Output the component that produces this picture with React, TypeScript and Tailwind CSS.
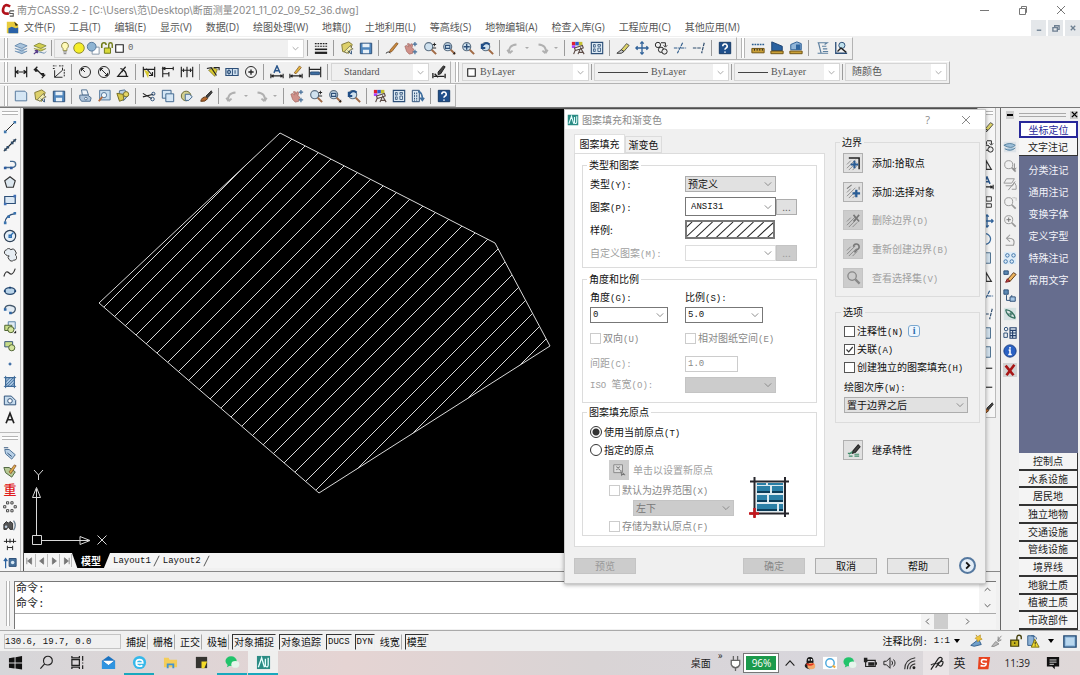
import React, { useState } from "react";

const N = "#2d4f78";
const B = "#8fb8dc";
const K = "#222";

const magnifier = (
  <>
    <circle cx="6.5" cy="6.5" r="4.6" fill="#cfe1ee" stroke="#5b6f82" strokeWidth="1.3" />
    <path d="M10 10l5 5" stroke="#a06a45" strokeWidth="2.2" />
  </>
);
const grayLens = (
  <>
    <circle cx="6.5" cy="6.5" r="4.6" stroke="#999" />
    <path d="M10 10l4.5 4.5" stroke="#999" strokeWidth="2" />
  </>
);
const hatchBase = <path d="M1 9l4-4M1 13l9-9M3 15l8-8M7 15l5-5" stroke="#777" strokeWidth=".8" />;

const icons: Record<string, React.ReactNode> = {
  layers: <path d="M1 5.5l6-3 8 3-6 3zM1 8.5l8 3 6-3M1 11.5l8 3 6-3" fill="#a9c4dc" stroke="#6d8fb0" />,
  layersPrev: (
    <>
      <path d="M1 5.5l6-3 8 3-6 3zM1 8.5l8 3 6-3" fill="#d3cf4e" stroke="#8a9145" />
      <path d="M5 12l8 2 2-2" stroke="#6d8fb0" />
      <path d="M1 15l4-4M2 11h3v3" stroke="#5a3f8a" strokeWidth="1.5" />
    </>
  ),
  bulb: (
    <>
      <path d="M8 1.5a4 4 0 0 0-2.2 7.3V11h4.4V8.8A4 4 0 0 0 8 1.5z" fill="#fffbb8" stroke="#8f8a4a" />
      <path d="M6 12.5h4M6.5 14.5h3" stroke="#777" />
    </>
  ),
  sun: <circle cx="8" cy="8" r="6" fill="#f5ee2a" stroke="#8b8730" />,
  freeze: (
    <>
      <path d="M7 7h8v8H7z" fill="#fff" stroke="#8797a8" />
      <circle cx="6.5" cy="6.5" r="5" fill="#8eb4d3" stroke="#55789b" />
    </>
  ),
  lock: (
    <>
      <path d="M2 8V4.5a2.5 2.5 0 0 1 5 0" stroke="#6f7a16" strokeWidth="1.8" />
      <path d="M5 8h7v6H5z" fill="#d8d93a" stroke="#6f7a16" />
      <path d="M10 8V4a2 2 0 0 1 4 0v4" stroke="#6f7a16" strokeWidth="1.6" />
    </>
  ),
  swatch: <path d="M2.5 2.5h11v11h-11z" fill="#fff" stroke={K} strokeWidth="1.6" />,
  lines: (
    <>
      <path d="M1 3h14M1 6h14" stroke={K} strokeWidth="1.4" strokeDasharray="2 1" />
      <path d="M1 9.5h14" stroke={K} strokeWidth="1.8" />
      <path d="M1 13.5h14" stroke={K} strokeWidth="2.6" />
    </>
  ),
  open: (
    <>
      <path d="M2 4l8-3 4 3-4 10-7-2z" fill="#ddd06a" stroke="#837a35" />
      <path d="M5 12l7-7 1 3 2 1-3 1-4 4z" fill="#f4eeb0" stroke="#5b5a43" strokeWidth=".8" />
      <path d="M9 11l4 4M13 11v4" stroke={N} />
    </>
  ),
  save: (
    <>
      <path d="M1.5 2.5h13v12h-13z" fill="#4f86bd" stroke={N} />
      <path d="M4 3h8v4H4zM4.5 10h7v4h-7z" fill="#e8f0f7" stroke="none" />
    </>
  ),
  page: <path d="M1.5 2.5h11l2 2v9h-13z" fill="#d5e6f4" stroke="#54789c" />,
  pencil: (
    <>
      <path d="M6 10l7-8 2 1-7 9-3 1z" fill="#c9893e" stroke="#7c4c1e" strokeWidth=".8" />
      <path d="M1 14q4-3 5 0" stroke={K} />
    </>
  ),
  pan: (
    <>
      <path d="M1 6l2-1 2 2-1-4h2l1 3 1-3 2 1-1 4 2 1-1 5-4 1-3-3z" fill="#cf9089" stroke="#9b6059" strokeWidth=".7" />
      <path d="M12.5 1v5M10 3.5h5M12.5 10v5M10 12.5h5" stroke="#466f99" strokeWidth="1.4" />
    </>
  ),
  zoomRt: (
    <>
      {magnifier}
      <path d="M11 4h4M13 2v4M11 8h4" stroke={K} />
    </>
  ),
  zoomWin: (
    <>
      {magnifier}
      <path d="M4 5h5v3.5H4z" stroke={N} strokeWidth="1.3" />
      <path d="M15 12v3h-3z" fill={K} stroke="none" />
    </>
  ),
  zoomExt: (
    <>
      {magnifier}
      <path d="M3 6.5h7M6.5 3v7" stroke={N} strokeWidth="1.6" />
    </>
  ),
  zoomPrev: (
    <>
      {magnifier}
      <path d="M2 7q4-7 9-3M2 3v5h4" stroke="#1f4d86" strokeWidth="2.2" />
    </>
  ),
  undo: <path d="M4 14Q2 5 12 4M4 14l-2.5-4M4 14l3.5-3" stroke="#b0b0b0" strokeWidth="2.2" />,
  redo: <path d="M12 14Q14 5 4 4M12 14l2.5-4M12 14l-3.5-3" stroke="#b0b0b0" strokeWidth="2.2" />,
  props: (
    <>
      <path d="M1 1h4v4H1z" fill="#d23" stroke="none" />
      <path d="M5 1h4v4H5z" fill="#2a5bd0" stroke="none" />
      <path d="M9 1h4v4H9z" fill="#c5c030" stroke="none" />
      <path d="M1 5h4v3H1z" fill="#a4f" stroke="none" />
      <path d="M4 8l9-3 1 3-9 3zM3 15l2-5M8 15l3-7 4 7M9 13h5" stroke="#5c4b46" strokeWidth="1.3" />
    </>
  ),
  grid: (
    <>
      <path d="M1.5 1.5h13v13h-13z" fill="#dbe8f2" stroke={N} strokeWidth="1.3" />
      <path d="M4 4h2v3H4zM9 4h3v2H9zM4 9h2v3H4zM9 8h3v4H9z" stroke={N} strokeWidth=".9" />
    </>
  ),
  palette: (
    <>
      <path d="M1.5 1.5h8v13h-8z" fill="#dbe8f2" stroke={N} />
      <path d="M4 4v10M6.5 4v10" stroke={N} strokeDasharray="2 1" />
      <path d="M8 3q5 0 5 9M10.5 10l2.5 3 2-3" stroke="#3f6f9f" strokeWidth="1.8" />
    </>
  ),
  eraser: (
    <>
      <path d="M6 10l6-7 3 2-6 7z" fill="#ddd36a" stroke={K} strokeWidth=".8" />
      <path d="M1 14l5-4 3 2-3 2z" fill="#ccc" stroke="#333" />
    </>
  ),
  move: <path d="M8 1v14M1 8h14M6 3l2-2 2 2M6 13l2 2 2-2M3 6L1 8l2 2M13 6l2 2-2 2" stroke="#2f6199" strokeWidth="1.5" />,
  copyObj: (
    <>
      <circle cx="4.5" cy="4.5" r="3" stroke={K} />
      <path d="M8 2h5v4M11 5l2 2 2-2" stroke={K} />
      <circle cx="8" cy="10" r="3" stroke={K} />
      <circle cx="12" cy="12" r="3" fill="#eee" stroke={K} />
    </>
  ),
  trim: <path d="M1 8h6M9 8h6M11 2L5 14" stroke="#315d8c" strokeWidth="1.3" strokeDasharray="4 1" />,
  extend: <path d="M1 8h9M14 2l-3 12" stroke="#2c4a6b" strokeWidth="1.3" strokeDasharray="4 1" />,
  help: (
    <>
      <path d="M1.5 1.5h13v13h-13z" fill="#1f4f8b" stroke="#143763" />
      <path d="M5.5 6a2.5 2.5 0 1 1 3.5 2.2Q8 8.8 8 10M8 12v1.5" stroke="#fff" strokeWidth="1.8" />
    </>
  ),
  dist: (
    <>
      <path d="M1 4h14" stroke="#2b5e90" strokeDasharray="2 1" strokeWidth="1.5" />
      <path d="M1 8.5h14v5H1z" fill="#caa038" stroke="#6f5211" />
      <path d="M4 9v2M7 9v2M10 9v2M13 9v2" stroke={K} />
    </>
  ),
  area: (
    <>
      <path d="M2 1l12 5v5H2z" fill="#2a62a0" stroke="#1b4270" />
      <path d="M1 11.5h14v3H1z" fill="#caa038" stroke="#6f5211" />
    </>
  ),
  mass: (
    <>
      <path d="M2 4l7-3 5 2v7H2z" fill="#91b5d8" stroke="#2d5f94" />
      <path d="M8 4h5v6H8z" fill="#2f659e" stroke="none" />
      <path d="M1 11.5h14v3H1z" fill="#caa038" stroke="#6f5211" />
    </>
  ),
  list: <path d="M3 2h11l-3 2M4 2l3 12H3M8 6h5M9 9h5M9 12h6M7 14h8" stroke="#5c7f9f" strokeWidth="1.3" />,
  locate: (
    <>
      <path d="M2 1v13h13" stroke={N} strokeWidth="1.5" />
      <circle cx="9" cy="5" r="3.5" fill="#bfe0ec" stroke={N} />
      <path d="M4 12l4-4 6 5" stroke={K} strokeWidth="1.5" />
    </>
  ),
  dimH: <path d="M1.5 2v12M14.5 2v12M2 8h12M5 6L2 8l3 2M11 6l3 2-3 2" stroke={K} strokeWidth="1.4" />,
  dimA: <path d="M1 6l4-4M10 15l4-4M3 4l9 9M3 4v3h2M12 13v-3H9" stroke={K} strokeWidth="1.5" />,
  dimOrd: (
    <>
      <path d="M3 6v8h9M3 14l9-8V3" stroke={K} />
      <path d="M1 1h4M8 1h5M1 4h3M14 5v9" stroke={K} strokeDasharray="2 1" />
    </>
  ),
  dimR: (
    <>
      <circle cx="8" cy="8" r="6.3" stroke={K} />
      <path d="M8 8L4 4M4 7V4h3" stroke={K} />
    </>
  ),
  dimD: (
    <>
      <circle cx="8" cy="8" r="6.3" stroke={K} />
      <path d="M4 4l8 8M4 7V4h3M12 9v3H9" stroke={K} />
    </>
  ),
  angle: <path d="M14 13H2L11 2M7 5q5 2 5 8M5 4l3 1-1 3" stroke={K} strokeWidth="1.4" />,
  dimQ: (
    <>
      <path d="M2 5l6 3-1 7z" fill="#d8c92e" stroke="none" />
      <path d="M1.5 2v12M14.5 2v12M2 5h12M5 4l7 8M12 8v4H8" stroke={K} strokeWidth="1.3" />
    </>
  ),
  dimB: <path d="M2 2v12M14 2v4M9 8v5M2 4h12M2 10h7M5 2.5L2 4l3 1.5" stroke={K} strokeWidth="1.3" />,
  dimC: <path d="M1.5 2v12M8 2v12M14.5 2v12M2 6h12M4 4v4M12 4v4" stroke={K} strokeWidth="1.3" />,
  leader: (
    <>
      <path d="M3 6l5-3 5 2-3 8z" fill="#d9ca34" stroke="#625a1a" strokeWidth=".7" />
      <path d="M1 4l5-1 6 9M9 3h6v3" stroke={K} strokeWidth="1.3" />
    </>
  ),
  tol: (
    <>
      <path d="M1 4h14v8H1z" fill="#cfe0f0" stroke={N} strokeWidth="1.3" />
      <circle cx="4.5" cy="8" r="2" stroke={N} />
      <path d="M8.5 4v8M4.5 5v6M11.5 6v4" stroke={N} />
    </>
  ),
  center: (
    <>
      <circle cx="8" cy="8" r="6.3" stroke={K} />
      <path d="M8 5v6M5 8h6" stroke={K} strokeWidth="1.5" />
    </>
  ),
  dimEditA: (
    <>
      <path d="M4.5 9L8 1l3.5 8M6 6.5h4" stroke="#29558a" strokeWidth="1.6" />
      <path d="M1 10v5M15 10v5M2 12.5h12M4 11l-2 1.5L4 14M12 11l2 1.5L12 14" stroke={K} strokeWidth="1.3" />
    </>
  ),
  dimEdit: (
    <>
      <path d="M6 9l6-8 2 2-6 7z" fill="#e0b43b" stroke="#7c4c1e" strokeWidth=".8" />
      <path d="M1 10v5M15 10v5M2 12.5h12M4 11l-2 1.5L4 14M12 11l2 1.5L12 14" stroke={K} strokeWidth="1.3" />
    </>
  ),
  dimUpd: (
    <>
      <path d="M1.5 2v12M14.5 2v12M2 5h12" stroke={K} strokeWidth="1.3" />
      <path d="M3 8h10v3H3z" fill="#3b6da2" stroke={N} />
    </>
  ),
  dimStyle: (
    <>
      <path d="M7 8l6-7 2 1-5 8-3 1z" fill="#444" stroke={K} />
      <path d="M1 9v6M15 10v5M2 13h12M3 10l4 4" stroke={K} strokeWidth="1.5" />
    </>
  ),
  print: (
    <>
      <path d="M4 1h6l2 6H5z" fill="#eef4fa" stroke="#4e6e90" />
      <path d="M2 7h9l4 3-1 4H4l-2-3z" fill="#afc4da" stroke="#4e6e90" />
      <circle cx="9" cy="11" r="1.5" fill="#fff" stroke="#4e6e90" />
    </>
  ),
  preview: (
    <>
      <path d="M3 1.5h12v11H3z" fill="#c6dced" stroke="#54789c" />
      <circle cx="8" cy="7" r="3" fill="#eef6fb" stroke="#54789c" />
      <path d="M6 9l-4 5" stroke="#b56a3a" strokeWidth="2" />
    </>
  ),
  publish: (
    <>
      <path d="M4 2l6-1 4 6-5 6-6-2z" fill="#b7cde2" stroke="#4e6e90" />
      <path d="M1 5l7 1 1 6-5 2z" fill="#d7c84a" stroke="#756c23" />
      <circle cx="11.5" cy="6" r="3" fill="#e6d766" stroke="#756c23" />
    </>
  ),
  cut: (
    <>
      <path d="M1 5l10 6M1 9l12-3" stroke={K} strokeWidth="1.3" />
      <circle cx="12" cy="11.5" r="2" stroke={N} />
      <circle cx="13" cy="5.5" r="1.8" stroke={N} />
    </>
  ),
  copy: (
    <>
      <path d="M1.5 1.5h10v9h-10z" fill="#d5e6f4" stroke="#41678f" />
      <path d="M5.5 5.5h9v9h-9z" fill="#d5e6f4" stroke="#41678f" />
    </>
  ),
  paste: (
    <>
      <circle cx="7" cy="8" r="5.5" fill="#d3d091" stroke="#6b6a35" />
      <path d="M6 6h5l3 3-4 4H6z" fill="#dce9f5" stroke="#41678f" />
    </>
  ),
  brush: (
    <>
      <path d="M8 8l6-6 1 2-5 6z" fill="#444" stroke="#333" />
      <path d="M2 14q1-5 6-5l2 2q-3 4-8 3z" fill="#b5672d" stroke="#5d3a1c" />
    </>
  ),
  line: (
    <>
      <path d="M3 13L13 3" stroke={K} />
      <path d="M1 12h3v3H1zM12 1h3v3h-3z" fill="#3f77ad" stroke="none" />
    </>
  ),
  xline: (
    <>
      <path d="M1 15L15 1" stroke={K} strokeWidth="1.4" />
      <path d="M4 9h3v3H4zM9 4h3v3H9zM15 1l-4 1 3 3zM1 15l1-4 3 3z" fill="#2d4a68" stroke="none" />
    </>
  ),
  pline: (
    <>
      <path d="M2 12h9a3.5 3.5 0 0 0 0-7H8" stroke="#466c92" strokeWidth="1.6" />
      <path d="M1 11h3v3H1zM8 11h3v3H8z" fill="#2d5a9e" stroke="none" />
    </>
  ),
  polygon: <path d="M8 2l6 4.5L11.8 14H4.2L2 6.5z" fill="#dce7ef" stroke="#333" strokeWidth="1.3" />,
  rect: (
    <>
      <path d="M2 4h12v8H2z" fill="#dbe8f4" stroke={N} strokeWidth="1.4" />
      <path d="M1 11h3v3H1zM12 2h3v3h-3z" fill="#3f6fb5" stroke="none" />
    </>
  ),
  arc: (
    <>
      <path d="M2 14Q3 4 14 3" stroke={N} strokeWidth="1.3" />
      <path d="M1 12h3v3H1zM5 5h3v3H5zM12 1h3v3h-3z" fill="#3a74b0" stroke="none" />
    </>
  ),
  circle: (
    <>
      <circle cx="8" cy="8" r="6.5" fill="#e3eef7" stroke="#2d4056" strokeWidth="1.3" />
      <path d="M8 8l4-4M7 7h2.5v2.5H7z" stroke="#2b6fb3" strokeWidth="1.5" />
    </>
  ),
  cloud: <path d="M3 7.5A3 3 0 0 1 4 2a3 3 0 0 1 5 0 3 3 0 0 1 5 1.5 3 3 0 0 1 0 4.5 3.2 3.2 0 0 1-2 6 3 3 0 0 1-5-1 2.6 2.6 0 0 1 0-4Q5 9.5 3 7.5z" fill="#e6edf3" stroke="#333" />,
  spline: <path d="M1 12q2-8 6-4t7-5" stroke="#333" strokeWidth="1.3" />,
  ellipse: (
    <>
      <ellipse cx="8" cy="8" rx="6" ry="3.8" fill="#b9d4ea" stroke="#26486f" strokeWidth="1.5" />
      <path d="M1 7h2v2H1zM7 3h2v2H7zM13 7h2v2h-2z" fill="#143e70" stroke="none" />
    </>
  ),
  ellArc: (
    <>
      <path d="M2 8q1-5 7-4t5 5-6 4" stroke="#44586c" strokeWidth="1.5" fill="#e2ebf3" />
      <path d="M1 7h3v3H1zM7 11h3v3H7z" fill="#2d65a5" stroke="none" />
    </>
  ),
  block: (
    <>
      <path d="M6 2h8v8H6z" fill="#dfeaf3" stroke="#5b84a8" />
      <path d="M2 6h8v6H2z" fill="#c7dc88" stroke="#4c6130" />
      <circle cx="9" cy="11" r="3.5" fill="#d5e59d" stroke="#4c6130" />
      <path d="M15 12v3h-3z" fill={K} stroke="none" />
    </>
  ),
  blockMake: (
    <>
      <path d="M2 3h9v6H2z" fill="#c7dc88" stroke="#37567a" />
      <circle cx="10" cy="10" r="3.5" fill="#d5e59d" stroke="#4c6130" />
    </>
  ),
  point: <path d="M7 7h2v2H7z" fill="#3c6ca5" stroke="#3c6ca5" />,
  hatch: (
    <>
      <path d="M3 3h10v10H3z" fill="#a9c7e3" stroke={N} />
      <path d="M3 8l5-5M3 12l9-9M5 13l8-8M9 13l4-4M3 1v14M13 1v14M1 3h14M1 13h14" stroke="#3d6a99" />
    </>
  ),
  region: (
    <>
      <path d="M1.5 3.5h8l5 5v5h-13z" fill="#c7dced" stroke={N} />
      <circle cx="8" cy="9" r="2.6" fill="#fff" stroke={N} />
    </>
  ),
  letterA: <path d="M3.5 14L8 2.5 12.5 14M5 10h6" stroke="#222" strokeWidth="1.9" />,
  tag: (
    <>
      <path d="M2 4h5l7 6-4 5-7-6z" fill="#b8d0e6" stroke="#4f7397" />
      <path d="M1 2h5M5 8l5 4" stroke={N} />
    </>
  ),
  tagEdit: (
    <>
      <path d="M1 4h6l7 5-4 6-7-5z" fill="#b6c894" stroke="#4f6740" />
      <path d="M7 9l6-8 2 1-6 9z" fill="#dfb04a" stroke="#7a3f23" strokeWidth=".8" />
    </>
  ),
  dots: <path d="M4 2h2.5v2.5H4zM9 2h2.5v2.5H9zM4 11h2.5v2.5H4zM9 11h2.5v2.5H9zM.7 6.5h2.5V9H.7zM12.7 6.5h2.5V9h-2.5z" stroke="#444" />,
  bino: (
    <>
      <path d="M1 7l3-3 2 2 2-2 3 2v7H8l-2-3-2 3H1z" fill="#555" stroke="#333" />
      <circle cx="3.5" cy="10" r="1.5" fill="#bcd" stroke="none" />
      <path d="M12 3q4 5 0 11" stroke="#6b7f91" strokeWidth="1.5" />
    </>
  ),
  gap: <path d="M1 5h14M4 2v5M8 2v5M12 2v5M5 10v5M11 10v5M5 12h6" stroke={K} />,
  copyUp: (
    <>
      <path d="M3 15V5M1 7l2-3 2 3" stroke="#2b62a0" strokeWidth="1.4" />
      <path d="M7 4h8v9H7z" fill="#48729c" stroke={N} />
      <circle cx="11" cy="8.5" r="2" fill="#d9e9f5" stroke="none" />
    </>
  ),
  triangle: <path d="M7 3v10h6z" stroke="#333" strokeWidth="1.3" />,
  rotate: <path d="M5 2a6 6 0 0 1 2 12" stroke="#3b6b9c" strokeWidth="1.5" />,
  bracket: <path d="M4 2h8v12H4z" fill="#d3e2ee" stroke="#4d6f8e" />,
  corners: <path d="M7 2h6v5H7zM7 10h6v4H7z" stroke="#333" />,
  dash: <path d="M3 6h11" stroke="#333" strokeWidth="1.4" />,
  orbit: (
    <>
      <path d="M1 2h14v12H1z" fill="#dde3e8" stroke="none" />
      <path d="M1 6q7-4 13 0-4 5-13 0zM2 10q7 4 12-1" fill="#9cbfd9" stroke="#58829f" />
    </>
  ),
  lens1: (
    <>
      {grayLens}
      <path d="M13 5v7M11 10l2 3 2-3" stroke="#888" />
    </>
  ),
  lens2: <path d="M4 2h9l-3 5H1zM3 10h8l2-4 2 4v4h-5M6 15l8-10" stroke="#999" />,
  lens3: (
    <>
      {grayLens}
      <path d="M11 2h4v4" stroke="#999" strokeDasharray="1 1" />
    </>
  ),
  lens4: (
    <>
      {grayLens}
      <path d="M4 6.5h5M6.5 4v5" stroke="#777" />
    </>
  ),
  back: <path d="M3 14h9q3-9-7-8M8 2L4 6l4 4" stroke="#999" strokeWidth="1.2" />,
  nodes: (
    <>
      <path d="M1 1h14v14H1z" fill="#dcebf7" stroke="none" />
      <circle cx="5" cy="5" r="2" stroke="#3f74a8" />
      <circle cx="12" cy="5" r="2" stroke="#3f74a8" />
      <circle cx="3" cy="12" r="2" stroke="#3f74a8" />
      <circle cx="10" cy="12" r="2" stroke="#3f74a8" />
    </>
  ),
  erase2: (
    <>
      <path d="M1 1h5v4H1z" fill="#5d8ab5" stroke={N} />
      <path d="M5 11l7-8 3 2-7 8z" fill="#eeb45c" stroke="#5d3a1c" />
      <path d="M3 14l2-4 3 3z" fill="#c44" stroke="#722" />
    </>
  ),
  flow: (
    <>
      <path d="M1 1h5v5H1z" fill="#5d8ab5" stroke={N} />
      <path d="M4 7v6h4M10 7v3" stroke={N} />
      <path d="M8 9h6v5H8z" fill="#a6c6e4" stroke={N} />
    </>
  ),
  swap: (
    <>
      <path d="M1 1h14v14H1z" fill="#d6e3e3" stroke="none" />
      <path d="M3 3q1 8 11 10M3 3q9 1 11 10M6 8h5M9 6v4" stroke="#34705f" strokeWidth="1.3" />
    </>
  ),
  table: (
    <>
      <circle cx="3.5" cy="3.5" r="2" stroke={N} />
      <path d="M1 8h4v5H1z" stroke={N} />
      <path d="M8 2h7v12H8zM8 5h7M8 8h7M8 11h7M11 5v9" fill="#dfe9f3" stroke="#25406b" strokeWidth="1.3" />
    </>
  ),
  info: (
    <>
      <circle cx="8" cy="8" r="7" fill="#2b62c4" stroke="#173c83" />
      <path d="M8 3.5v2M6.5 7H8v5M6 12h4" stroke="#fff" strokeWidth="1.8" />
    </>
  ),
  redX: (
    <>
      <path d="M0 0h16v16H0z" fill="#d2d2d2" stroke="none" />
      <path d="M3 3l9 11M13 2L4 14" stroke="#a81616" strokeWidth="3" />
    </>
  ),
  pick: (
    <>
      {hatchBase}
      <path d="M3 2h11v12" stroke={K} strokeWidth="1.6" />
      <path d="M9 5v8M5 9h8" stroke="#2a5d96" strokeWidth="2.2" />
    </>
  ),
  selObj: (
    <>
      {hatchBase}
      <path d="M1 5l5-4M14 3v3" stroke="#777" />
      <path d="M11 6v8M7 10h8" stroke="#2a5d96" strokeWidth="2.4" />
    </>
  ),
  delB: (
    <>
      {hatchBase}
      <path d="M8 2l6 7M14 2L8 9" stroke="#777" strokeWidth="1.7" />
    </>
  ),
  recB: (
    <>
      {hatchBase}
      <path d="M8 5a3 3 0 1 1 4 3l-3 3" stroke="#777" strokeWidth="1.7" />
    </>
  ),
  viewSel: (
    <>
      <circle cx="6.5" cy="6.5" r="4.5" fill="#ccc" stroke="#888" strokeWidth="1.4" />
      <path d="M10 10l4.5 4.5" stroke="#888" strokeWidth="2.4" />
    </>
  ),
  inherit: (
    <>
      <path d="M7 9l6-7 2 2-5 6-3 1z" fill="#444" stroke={K} />
      <path d="M3 12l4-3M3 14h4M9 12h5M9 14h5M2 11h4" stroke="#3f8c6a" strokeWidth="1.2" />
    </>
  ),
  clickOrigin: (
    <>
      <path d="M2 2h10v9H2z" fill="#ddd" stroke="#888" />
      <path d="M5 4l4 4M9 4L5 8M10 8l1 6 2-2 2 2" stroke="#777" strokeWidth="1.2" />
    </>
  ),
  annA: (
    <>
      <path d="M2 13L11 6l3 6-8 2z" fill="#6f9fca" stroke="#35608c" />
      <path d="M8 1l2 2 3-2v3l2 2-3 1-2 2-1-3-2-1 2-2z" fill="#f0c63a" stroke="#b08a1c" strokeWidth=".7" />
    </>
  ),
  annB: <path d="M2 14l5-6 4 3-6 3zM9 7l5-6M10 2v6l4-2" fill="#bbb" stroke="#888" />,
  padlock: (
    <>
      <path d="M2 7h9v7H2z" fill="#c4b31f" stroke="#443f0c" strokeWidth="1.4" />
      <path d="M9 7V4a2.5 2.5 0 0 1 5 0v2M6.5 9.5v2" stroke="#443f0c" strokeWidth="1.6" />
    </>
  ),
  warn: (
    <>
      <path d="M2 2h7v11H2z" fill="#8fb3d6" stroke="#35608c" />
      <path d="M6 2q6 0 6 4" stroke="#35608c" />
      <path d="M10 6l5 9H6z" fill="#f5df2f" stroke="#7b6f12" />
      <path d="M10.5 9v3M10.5 13v1" stroke={K} />
    </>
  ),
  clean: (
    <>
      <path d="M2 2h13v12H2z" fill={B} stroke="#234a74" strokeWidth="1.5" />
      <path d="M4 4h9v8H4z" fill="#b9d7ee" stroke="none" />
    </>
  ),
  win: <path d="M1 3.5l6-1V8H1zM8 2.3L15 1v7H8zM1 9h6v5.5l-6-1zM8 9h7v6.5l-7-1z" fill="#111" stroke="none" />,
  search: (
    <>
      <circle cx="9.5" cy="6" r="4.7" stroke="#222" strokeWidth="1.2" />
      <path d="M6 9.5L1.5 14.5" stroke="#222" strokeWidth="1.3" />
    </>
  ),
  taskview: <path d="M2 1v2h8V1M2 5h8v6H2zM2 15v-2h8v2M13.5 1v5M13.5 8v1M13.5 11v4" stroke="#222" strokeWidth="1.3" />,
  mail: (
    <>
      <path d="M1 6l7-5 7 5v9H1z" fill="#1b72c0" stroke="none" />
      <path d="M2 6h12l-6 5z" fill="#fff" stroke="none" />
      <path d="M1 6l7 5 7-5v9H1z" fill="#2f94e0" stroke="none" />
    </>
  ),
  edge: (
    <>
      <circle cx="8" cy="8" r="7" fill="#35b8ea" stroke="none" />
      <path d="M4.5 8.5h7q0-3.5-3.5-3.5T4.5 8.5 8 12q2 0 3-1" stroke="#fff" strokeWidth="1.8" />
    </>
  ),
  folder: (
    <>
      <path d="M1 3h5l1 2h8v8H1z" fill="#f4cd59" stroke="none" />
      <path d="M4 14V9h8v5h-2v-3H6v3z" fill="#4495cf" stroke="none" />
    </>
  ),
  note: (
    <>
      <path d="M2 2h12v12H2z" fill="#353430" stroke="none" />
      <path d="M8 7h6l-3 7H8z" fill="#f3da28" stroke="none" />
    </>
  ),
  wechat: (
    <>
      <ellipse cx="6.5" cy="6.5" rx="6" ry="5.2" fill="#22c36b" stroke="none" />
      <ellipse cx="11" cy="10" rx="4.3" ry="3.7" fill="#e6f6ec" stroke="none" />
      <path d="M3 10l-1 3 4-2z" fill="#22c36b" stroke="none" />
    </>
  ),
  acad: (
    <>
      <path d="M1 1h14v14H1z" fill="#2b8c84" stroke="none" />
      <path d="M2.5 13L6 3l3 10M10 4v8q3 2 3-2V3" stroke="#e8ffff" strokeWidth="1.4" />
    </>
  ),
  plug: <path d="M6 1v4M10 1v4M4 5h8v4q-1 3-4 3t-4-3zM8 12v3" fill="#fff" stroke="#666" strokeWidth="1.2" />,
  chevUp: <path d="M3 11l5-5.5 5 5.5" stroke="#222" strokeWidth="1.3" />,
  qq: (
    <>
      <ellipse cx="8" cy="6" rx="4" ry="5" fill="#1a1a1a" stroke="none" />
      <ellipse cx="7.5" cy="11" rx="5.5" ry="4" fill="#222" stroke="none" />
      <ellipse cx="9.5" cy="11.5" rx="4.5" ry="3.7" fill="#f4a96a" stroke="none" />
      <path d="M4 8q4 2.5 8 0v2q-4 2-8 0z" fill="#e13320" stroke="none" />
      <path d="M6 4.5h1.5M9 4.5h1.5" stroke="#fff" strokeWidth="2" />
    </>
  ),
  chat: (
    <>
      <path d="M0 1h16v14H0z" fill="#fff" stroke="none" />
      <circle cx="8" cy="8" r="4.8" stroke="#4aa7dc" strokeWidth="1.6" />
      <path d="M11 11l3 2" stroke="#f0ab3c" strokeWidth="2.2" />
    </>
  ),
  batt: (
    <>
      <path d="M3 5h11v7H3z" stroke="#222" strokeWidth="1.3" />
      <path d="M6 7h7v4H6zM14 7h2v3h-2zM1 2h4v5H1z" fill="#222" stroke="none" />
    </>
  ),
  vol: <path d="M1 6h3l4-4v12l-4-4H1zM10 5.5q2 2.5 0 5M12 4q3.5 4 0 8" stroke="#222" strokeWidth="1.1" />,
  wifi: (
    <>
      <path d="M2 15Q2 4 14 2M5 15q0-8 9-9.5M8 15q0-5 6-6" stroke="#333" strokeWidth="1.3" />
      <circle cx="12.5" cy="13.5" r="1.7" fill="#222" stroke="none" />
    </>
  ),
  pen: <path d="M2 14.5l8-12q2-2 3.5-.5t-1.5 4l-5 6.5M2 9.5q5-3 8 0t4.5-1-2-2.5-4 2.5" stroke="#222" strokeWidth="1.3" />,
  sogou: (
    <>
      <path d="M2 1h13l-2 14H1z" fill="#e8431f" stroke="none" />
      <path d="M11.5 4.5Q5 3 5 6t5.5 2.5Q11 12.5 4 11" stroke="#fff" strokeWidth="1.8" />
    </>
  ),
  notice: (
    <>
      <path d="M1 1h14v11h-5v3l-3-3H1z" fill="#111" stroke="none" />
      <path d="M4 4.5h8M4 7h8M4 9.5h5" stroke="#ddd" />
    </>
  ),
  yellowFile: (
    <>
      <path d="M1 1h10l4 4v10H1z" fill="#e7cb3c" stroke="none" />
      <path d="M3 9l4-2 5 2 3-1v7H3z" fill="#2a62a8" stroke="none" />
      <path d="M10 1l5 4-3 1z" fill="#3c2f10" stroke="none" />
    </>
  ),
  cass: (
    <>
      <path d="M10.5 4Q4 0 2.5 6.5T9 12" stroke="#b1121b" strokeWidth="3" />
      <path d="M10 9h5M10 9v3h4v3h-4" stroke="#555" strokeWidth="1.2" />
    </>
  ),
};

function Icon({ name, className = "size-[14px]" }: { name: string; className?: string }) {
  return (
    <svg viewBox="0 0 16 16" fill="none" strokeWidth="1.1" aria-hidden="true" className={`${className} shrink-0`}>
      {icons[name]}
    </svg>
  );
}

function Chevron({ className = "size-[9px] text-[#777]" }: { className?: string }) {
  return (
    <svg viewBox="0 0 10 10" fill="none" stroke="currentColor" strokeWidth="1.2" aria-hidden="true" className={`${className} shrink-0`}>
      <path d="M1 3l4 4 4-4" />
    </svg>
  );
}

function Grip() {
  return <span className="ml-[4px] mr-[3px] h-[20px] w-[4px] shrink-0 border-x border-[#b5b5b5] bg-white" />;
}

function Tools({ items }: { items: string[] }) {
  return (
    <>
      {items.map((it, i) =>
        it === "|" ? (
          <span key={i} className="mx-[3px] h-[16px] w-px shrink-0 bg-[#9b9b9b]" />
        ) : it === "v" ? (
          <span key={i} className="flex w-[10px] shrink-0 justify-center">
            <span className="border-x-2 border-t-2 border-x-transparent border-t-[#aaa]" />
          </span>
        ) : (
          <button key={i} type="button" aria-label={it} className="flex h-[20px] w-[19px] shrink-0 items-center justify-center">
            <Icon name={it} />
          </button>
        )
      )}
    </>
  );
}

const barCls = "flex h-[23px] items-center border-b border-r border-[#b3b3b3] border-t border-t-white pr-[2px]";

function BarCombo({ label, value, className, swatch, rule }: { label: string; value: string; className: string; swatch?: boolean; rule?: string }) {
  return (
    <label className={`relative flex h-[18px] shrink-0 items-center border border-[#d5d5d5] bg-[#f0f0f0] ${className}`}>
      {swatch && <Icon name="swatch" className="ml-[3px] size-[11px]" />}
      {rule && <span className={`ml-[3px] h-px shrink-0 bg-[#444] ${rule}`} />}
      <select aria-label={label} className="h-full min-w-0 flex-1 appearance-none bg-transparent pl-[3px] font-['Liberation_Serif','Noto_Sans_CJK_SC',serif] text-[10px] leading-[14px] text-[#555] outline-none">
        <option>{value}</option>
      </select>
      <span className="pointer-events-none flex h-full w-[15px] items-center justify-center bg-white">
        <Chevron className="size-[7px] text-[#999]" />
      </span>
    </label>
  );
}

const menus = ["文件(F)", "工具(T)", "编辑(E)", "显示(V)", "数据(D)", "绘图处理(W)", "地籍(J)", "土地利用(L)", "等高线(S)", "地物编辑(A)", "检查入库(G)", "工程应用(C)", "其他应用(M)"];

function Header() {
  return (
    <header className="shrink-0">
      <div className="flex h-[19px] items-center bg-white text-[#888]">
        <Icon name="cass" className="ml-px size-[14px]" />
        <h1 className="ml-[2px] whitespace-nowrap font-['Inter','Noto_Sans_CJK_SC',sans-serif] text-[10px] leading-[14px]">
          南方CASS9.2 - [C:\Users\范\Desktop\断面测量2021_11_02_09_52_36.dwg]
        </h1>
        <div className="ml-auto mr-[14px] flex items-center gap-[28px]">
          <button type="button" aria-label="minimize"><svg viewBox="0 0 10 10" className="size-[10px]" stroke="#777"><path d="M0 5.5h9" /></svg></button>
          <button type="button" aria-label="restore"><svg viewBox="0 0 10 10" className="size-[10px]" fill="none" stroke="#777"><path d="M1.5 3.5h6v6h-6zM3.5 3V1.5h5v6H8" /></svg></button>
          <button type="button" aria-label="close"><svg viewBox="0 0 10 10" className="size-[10px]" stroke="#777"><path d="M1 1l8 8M9 1L1 9" /></svg></button>
        </div>
      </div>
      <nav className="flex h-[17px] items-center bg-white pl-[6px]">
        <Icon name="yellowFile" className="size-[13px]" />
        <div className="ml-[5px] flex gap-[14px]">
          {menus.map((m) => (
            <button key={m} type="button" className="whitespace-nowrap font-['Open_Sans','Noto_Sans_CJK_SC',sans-serif] text-[10px] leading-[15px] text-[#555]">
              {m}
            </button>
          ))}
        </div>
        <div className="ml-auto flex gap-[2px] self-stretch pt-px">
          {["M2 7h5", "M1 4h5v4H1zM3 4V2h5v4H6", "M2 2l5 5M7 2L2 7"].map((d) => (
            <button key={d} type="button" aria-label="window control" className="flex w-[15px] items-center justify-center bg-[#e4e7ea]">
              <svg viewBox="0 0 9 9" className="size-[8px]" fill="none" stroke="#6d7f91" strokeWidth="1.5"><path d={d} /></svg>
            </button>
          ))}
        </div>
      </nav>
      <div className="flex h-[24px] items-center">
        <div className={barCls}>
          <Grip />
          <Tools items={["layers", "layersPrev"]} />
          <span className="ml-[2px] mr-[2px] h-[16px] w-px bg-[#9b9b9b]" />
          <label className="flex h-[19px] w-[250px] items-center border border-[#d5d5d5] bg-[#f0f0f0] pl-[3px]">
            {["bulb", "sun", "freeze", "lock"].map((n) => (
              <Icon key={n} name={n} className="size-[14px]" />
            ))}
            <Icon name="swatch" className="size-[11px]" />
            <select aria-label="图层" className="min-w-0 flex-1 appearance-none bg-transparent pl-[3px] font-['Liberation_Mono',monospace] text-[9px] leading-[14px] text-[#666]">
              <option>0</option>
            </select>
            <span className="flex h-full w-[15px] items-center justify-center bg-white"><Chevron className="size-[7px] text-[#999]" /></span>
          </label>
          <Tools items={["|", "lines", "|", "open", "save", "|", "pencil", "pan", "zoomRt", "zoomWin", "zoomExt", "zoomPrev", "|", "undo", "v", "redo", "v", "|", "props", "grid", "|", "eraser", "move", "copyObj", "trim", "extend", "|", "help"]} />
        </div>
        <div className={barCls}>
          <Grip />
          <Tools items={["dist", "area", "mass", "|", "list", "locate"]} />
        </div>
      </div>
      <div className="flex h-[24px] items-center">
        <div className={barCls}>
          <Grip />
          <Tools items={["dimH", "dimA", "dimOrd", "|", "dimR", "dimD", "angle", "|", "dimQ", "dimB", "dimC", "|", "leader", "tol", "center", "|", "dimEditA", "dimEdit", "dimUpd", "|"]} />
          <BarCombo label="标注样式" value="Standard" className="w-[98px] pl-[9px]" />
          <Tools items={["dimStyle"]} />
        </div>
        <div className={barCls}>
          <Grip />
          <BarCombo label="颜色" value="ByLayer" className="w-[127px]" swatch />
          <span className="mx-[2px] h-[16px] w-px bg-[#9b9b9b]" />
          <BarCombo label="线型" value="ByLayer" className="w-[135px]" rule="w-[50px]" />
          <span className="mx-[2px] h-[16px] w-px bg-[#9b9b9b]" />
          <BarCombo label="线宽" value="ByLayer" className="w-[106px]" rule="w-[30px]" />
          <span className="mx-[2px] h-[16px] w-px bg-[#9b9b9b]" />
          <BarCombo label="打印样式" value="随颜色" className="w-[102px] pl-[3px]" />
        </div>
      </div>
      <div className="flex h-[24px] items-center border-b border-[#777]">
        <div className={barCls}>
          <Grip />
          <Tools items={["page", "open", "save", "|", "print", "preview", "publish", "|", "cut", "copy", "paste", "brush", "|", "undo", "v", "redo", "v", "|", "pan", "zoomRt", "zoomWin", "zoomPrev", "|", "props", "grid", "palette", "|", "help"]} />
        </div>
      </div>
    </header>
  );
}

const drawTools = ["line", "xline", "pline", "polygon", "rect", "arc", "circle", "cloud", "spline", "ellipse", "ellArc", "block", "blockMake", "point", "hatch", "region", "letterA"];
const extraTools = ["tag", "tagEdit", "重", "dots", "bino", "gap", "copyUp"];
const modifyTools = ["eraser", "copyObj", "triangle", "dimEditA", "corners", "move", "rotate", "bracket", "triangle", "trim", "extend", "bracket", "bracket", "dash", "dash", "brush"];

function VGrip() {
  return <span className="mx-[2px] my-[3px] h-[4px] shrink-0 border-y border-[#b5b5b5] bg-white" />;
}

function VTool({ name }: { name: string }) {
  return (
    <button type="button" aria-label={name} className="flex min-h-0 flex-1 items-center justify-center overflow-hidden">
      {name === "重" ? <span className="text-[13px] font-medium leading-[14px] text-[#e01b1b]">重</span> : <Icon name={name} />}
    </button>
  );
}

const boundary = "75,194 256,24 471,134 526,237 295,384";

function Drawing() {
  const lines = Array.from({ length: 25 }, (_, i) => 278 + i * 20 - Math.floor(i / 4));
  return (
    <svg className="min-h-0 w-full flex-1 bg-black" fill="none" stroke="#d8d8d8" role="img" aria-label="图形窗口">
      <clipPath id="parcel">
        <polygon points={boundary} />
      </clipPath>
      <g clipPath="url(#parcel)">
        {lines.map((c) => (
          <path key={c} d={`M${c - 450} 450L${c} 0`} />
        ))}
      </g>
      <polygon points={boundary} />
      <path d="M8.5 426.5h9v9h-9zM12.5 426V388M18 431.5h38" />
      <path d="M8.5 388.5L12.5 378.5 16.5 388.5zM12.5 380v8M56 427.5l10 4-10 4zM56 431.5h9" />
      <path d="M10 361l4.5 5 4.5-5M14.5 366v5M73.5 426.5l9 9M82.5 426.5l-9 9" />
    </svg>
  );
}

function LayoutTabs() {
  return (
    <div className="flex h-[15px] shrink-0 items-center bg-[#f4f4f4] text-[10px] leading-[14px]">
      {["M7 1L2 5l5 4zM1 1v8", "M7 1L2 5l5 4z", "M3 1l5 4-5 4z", "M3 1l5 4-5 4zM9 1v8"].map((d) => (
        <button key={d} type="button" aria-label="scroll layouts" className="flex h-[13px] w-[12px] items-center justify-center border-r border-[#bbb]">
          <svg viewBox="0 0 10 10" className="size-[8px]" fill="#777" stroke="#777"><path d={d} /></svg>
        </button>
      ))}
      <button type="button" className="h-full w-[38px] bg-black font-bold text-white [clip-path:polygon(0_0,100%_0,84%_100%,14%_100%)]">模型</button>
      {["Layout1", "Layout2"].map((t) => (
        <button key={t} type="button" className="flex h-full items-center pl-[3px] font-['Liberation_Mono',monospace] text-[9px] text-[#111]">
          {t}
          <svg viewBox="0 0 8 14" className="ml-[2px] h-[14px] w-[7px]" stroke="#444"><path d="M7 1L1 13" /></svg>
        </button>
      ))}
    </div>
  );
}

function Code({ children }: { children: React.ReactNode }) {
  return <span className="font-['Liberation_Mono',monospace] text-[9px] leading-[9px]">{children}</span>;
}

function CommandWindow() {
  return (
    <section className="flex h-[59px] shrink-0 border-t border-[#888] pr-[4px] pt-[9px]">
      <span className="mb-[4px] ml-[6px] mr-[4px] w-[4px] border-x border-[#b5b5b5] bg-white" />
      <div className="mb-px flex min-w-0 flex-1 flex-col border-l border-t border-[#777] bg-white">
        <div className="flex flex-1 justify-between border-b border-[#aaa]">
          <div className="flex flex-col pl-px font-['Liberation_Mono','Noto_Sans_CJK_SC',monospace] text-[11px] leading-[15px] text-[#222]">
            <p className="h-[15px]">命令:</p>
            <p className="h-[15px]">命令:</p>
          </div>
          <div className="flex w-[17px] flex-col items-center justify-around bg-[#f4f4f4]">
            <Chevron className="size-[7px] rotate-180 text-[#444]" />
            <Chevron className="size-[7px] text-[#444]" />
          </div>
        </div>
        <div className="flex h-[15px]">
          <input aria-label="命令行" className="min-w-0 flex-1 bg-white px-[2px] text-[12px] outline-none" />
          <div className="flex w-[75px] items-center bg-[#f4f4f4] pl-[3px]">
            <Chevron className="size-[7px] rotate-90 text-[#444]" />
            <span className="ml-[3px] h-full w-[14px] bg-[#cdcdcd]" />
            <span className="ml-[16px] flex"><Chevron className="size-[7px] -rotate-90 text-[#444]" /></span>
          </div>
        </div>
      </div>
    </section>
  );
}

const sideIcons = ["orbit", "lens1", "lens2", "lens3", "lens4", "back", "nodes", "erase2", "flow", "swap", "table", "info", "redX"];
const notes = ["分类注记", "通用注记", "变换字体", "定义字型", "特殊注记", "常用文字"];
const layers = ["控制点", "水系设施", "居民地", "独立地物", "交通设施", "管线设施", "境界线", "地貌土质", "植被土质", "市政部件"];

function SidePanel() {
  return (
    <aside className="flex w-[80px] shrink-0 flex-col border-l border-[#666] pr-[2px] text-[10px] leading-[14px]">
      <div className="flex h-[13px] items-center pl-[5px]">
        <button type="button" aria-label="collapse" className="flex size-[8px] items-center justify-center bg-[#ccc]"><span className="h-[2px] w-[6px] bg-black" /></button>
        <span className="ml-[5px] h-[4px] flex-1 border-y border-[#aaa]" />
        <button type="button" aria-label="close panel" className="ml-[4px] flex size-[8px] items-center justify-center bg-[#ccc]">
          <svg viewBox="0 0 8 8" className="size-[7px]" stroke="#000" strokeWidth="1.6"><path d="M1 1l6 6M7 1L1 7" /></svg>
        </button>
      </div>
      <div className="flex min-h-0 flex-1">
        <div className="flex w-[18px] shrink-0 flex-col items-center pt-[17px]">
          <div className="flex h-[241px] flex-col">
            {sideIcons.map((n) => (
              <VTool key={n} name={n} />
            ))}
          </div>
        </div>
        <div className="flex min-w-0 flex-1 flex-col">
          <button type="button" className="h-[17px] border-2 border-[#28289a] bg-white leading-[13px] text-[#28289a]">坐标定位</button>
          <button type="button" className="h-[18px] border-b border-r border-[#333] bg-[#f6f6f6] text-[#222]">文字注记</button>
          <div className="flex flex-1 flex-col bg-[#666d8e] pt-[3px] text-[#f4f4fa]">
            {notes.map((n) => (
              <button key={n} type="button" className="h-[22px]">{n}</button>
            ))}
          </div>
          <div className="grid h-[177px] auto-rows-fr">
            {layers.map((n) => (
              <button key={n} type="button" className="flex items-center justify-center border-b-2 border-r border-[#333] bg-[#f4f4f4] text-[#222]">{n}</button>
            ))}
          </div>
        </div>
      </div>
    </aside>
  );
}

function Group({ title, className = "", children }: { title: string; className?: string; children: React.ReactNode }) {
  return (
    <fieldset className={`min-w-0 border border-[#dcdcdc] ${className}`}>
      <legend className="-ml-[3px] px-[2px] leading-[12px]">{title}</legend>
      {children}
    </fieldset>
  );
}

function Key({ text }: { text: string }) {
  const i = text.indexOf("(");
  if (i < 0) return <>{text}</>;
  return (
    <>
      {text.slice(0, i)}
      <Code>{text.slice(i)}</Code>
    </>
  );
}

function Pick({ id, label, value, className = "", tone = "bg-[#e1e1e1] border-[#adadad]", disabled }: { id: string; label?: string; value: string; className?: string; tone?: string; disabled?: boolean }) {
  const size = /^[\w.]+$/.test(value) ? "text-[9px]" : "text-[10px] pt-[2px]";
  return (
    <span className={`relative flex h-[16px] items-center border ${tone} ${className}`}>
      <select id={id} aria-label={label} disabled={disabled} className={`size-full appearance-none bg-transparent pl-[2px] font-['Liberation_Mono','Noto_Sans_CJK_SC',monospace] leading-[14px] outline-none ${size}`}>
        <option>{value}</option>
      </select>
      <Chevron className="pointer-events-none absolute right-[3px] size-[8px] text-[#888]" />
    </span>
  );
}

function Check({ label, on = false, disabled, className = "" }: { label: string; on?: boolean; disabled?: boolean; className?: string }) {
  const [checked, setChecked] = useState(on);
  return (
    <label className={`flex h-[18px] items-center gap-[2px] whitespace-nowrap ${disabled ? "text-[#888]" : ""} ${className}`}>
      <span className="relative flex size-[11px]">
        <input type="checkbox" checked={checked} disabled={disabled} onChange={(e) => setChecked(e.target.checked)} className="peer size-[11px] appearance-none border border-[#555] bg-white disabled:border-[#ccc]" />
        <svg viewBox="0 0 11 11" fill="none" stroke="#333" strokeWidth="1.2" className="pointer-events-none absolute inset-0 hidden peer-checked:block"><path d="M2.5 5.5l2.2 2.3L8.7 3" /></svg>
      </span>
      <span><Key text={label} /></span>
    </label>
  );
}

function Radio({ label, value, origin, setOrigin }: { label: string; value: string; origin: string; setOrigin: (v: string) => void }) {
  return (
    <label className="flex h-[18px] items-center gap-[2px]">
      <input type="radio" name="origin" checked={origin === value} onChange={() => setOrigin(value)} className="size-[12px] appearance-none rounded-full border border-[#333] bg-white checked:bg-[radial-gradient(circle,#333_3px,#fff_4px)]" />
      <span><Key text={label} /></span>
    </label>
  );
}

function IconRow({ icon, label, disabled }: { icon: string; label: string; disabled?: boolean }) {
  return (
    <button type="button" disabled={disabled} className={`flex flex-1 items-center gap-[9px] whitespace-nowrap ${disabled ? "text-[#a0a0a0]" : ""}`}>
      <span className={`flex size-[20px] items-center justify-center border ${disabled ? "border-[#c4c4c4] bg-[#cccccc]" : "border-[#b0b0b0] bg-[#e1e1e1]"}`}>
        <Icon name={icon} className="size-[15px]" />
      </span>
      <span><Key text={label} /></span>
    </button>
  );
}

function Brick() {
  return (
    <svg viewBox="0 0 40 42" className="h-[42px] w-[40px] shrink-0" aria-hidden="true">
      <path d="M7 7h28v29H7z" fill="#dceaf0" />
      <g fill="#2b7fa6">
        <path d="M8 7h9v2H8zM19 7h15v2H19zM8 10h13v7H8zM23 10h11v7H23zM8 19h10v7H8zM20 19h14v7H20zM8 28h20v7H8zM30 28h4v7h-4z" />
      </g>
      <path d="M8 16h13M23 16h11M8 25h10M20 25h14M8 34h20M30 34h4" stroke="#0c3c58" strokeWidth="2" />
      <path d="M5.5 1v40M36 1v40M1 5.5h39M1 37.5h39" stroke="#26262c" strokeWidth="2" />
      <path d="M5.5 32v10M0 37.5h10" stroke="#c5161c" strokeWidth="2.5" />
    </svg>
  );
}

const dlgBtn = "h-[16px] w-[62px] border";

function HatchDialog() {
  const [origin, setOrigin] = useState("current");
  const dim = "text-[#a0a0a0]";
  return (
    <section role="dialog" aria-labelledby="dlg-title" className="absolute right-[94px] top-[109px] w-[422px] border border-[#c9c9c9] bg-[#f0f0f0] text-[10px] leading-[14px] text-[#111] shadow-[0_1px_4px_rgba(0,0,0,0.35)]">
      <div className="flex h-[19px] items-center bg-white pl-[2px] text-[#8a8a8a]">
        <Icon name="acad" className="size-[12px]" />
        <h2 id="dlg-title" className="ml-[3px]">图案填充和渐变色</h2>
        <button type="button" aria-label="help" className="ml-auto mr-[31px] font-['Open_Sans',sans-serif] text-[11px]">?</button>
        <button type="button" aria-label="close dialog" className="mr-[14px]">
          <svg viewBox="0 0 10 10" className="size-[10px]" stroke="#888"><path d="M1 1l8 8M9 1L1 9" /></svg>
        </button>
      </div>
      <div className="flex px-[5px] pl-[9px] pt-[5px]">
        <div className="w-[251px] shrink-0">
          <div className="flex items-end">
            <button type="button" className="h-[19px] w-[51px] border border-b-0 border-[#e0e0e0] bg-white">图案填充</button>
            <button type="button" className="h-[17px] w-[37px] border border-[#dcdcdc] bg-[#f0f0f0]">渐变色</button>
          </div>
          <div className="border border-[#dcdcdc] bg-white px-[7px] pb-[10px] pt-[5px]">
            <Group title="类型和图案" className="pb-[3px] pl-[7px] pt-px">
              <div className="grid auto-rows-[23px] grid-cols-[95px_1fr] items-center">
                <label htmlFor="type"><Key text="类型(Y):" /></label>
                <Pick id="type" value="预定义" className="w-[91px]" />
                <label htmlFor="pattern"><Key text="图案(P):" /></label>
                <div className="flex items-center">
                  <Pick id="pattern" value="ANSI31" className="h-[19px] w-[91px] pl-[3px]" tone="bg-white border-[#777]" />
                  <button type="button" className="h-[16px] w-[21px] border border-[#adadad] bg-[#e1e1e1] leading-[10px] text-[#666]">...</button>
                </div>
                <span><Key text="样例:" /></span>
                <button type="button" aria-label="样例" className="h-[19px] w-[90px] border-2 border-[#777]">
                  <svg className="size-full bg-white" stroke="#222" viewBox="0 0 84 15" preserveAspectRatio="none">
                    {Array.from({ length: 10 }, (_, i) => (
                      <path key={i} d={`M${i * 10 - 12} 16L${i * 10 + 5} 0`} />
                    ))}
                  </svg>
                </button>
                <label htmlFor="custom" className={dim}><Key text="自定义图案(M):" /></label>
                <div className="flex items-center">
                  <Pick id="custom" value="" disabled className="w-[91px]" tone="bg-white border-[#ddd]" />
                  <button type="button" disabled className="h-[16px] w-[21px] border border-[#c4c4c4] bg-[#ccc] leading-[10px] text-[#999]">...</button>
                </div>
              </div>
            </Group>
            <Group title="角度和比例" className="mt-[5px] pb-[7px] pl-[7px] pt-[2px]">
              <div className="grid grid-cols-[95px_1fr] items-center">
                <label htmlFor="angle" className="h-[20px] pt-[3px]"><Key text="角度(G):" /></label>
                <label htmlFor="scale" className="h-[20px] pt-[3px]"><Key text="比例(S):" /></label>
                <Pick id="angle" value="0" className="w-[78px]" tone="bg-white border-[#777]" />
                <Pick id="scale" value="5.0" className="w-[78px]" tone="bg-white border-[#777]" />
                <Check label="双向(U)" disabled className="mt-[6px]" />
                <Check label="相对图纸空间(E)" disabled className="mt-[6px]" />
                <label htmlFor="gap" className={`mt-[6px] h-[21px] pt-[3px] ${dim}`}><Key text="间距(C):" /></label>
                <input id="gap" disabled defaultValue="1.0" className="mt-[6px] h-[16px] w-[53px] border border-[#ccc] bg-white pl-[2px] font-['Liberation_Mono',monospace] text-[9px] text-[#888]" />
                <label htmlFor="iso" className={`h-[21px] pt-[3px] ${dim}`}><Code>ISO </Code>笔宽<Code>(O):</Code></label>
                <Pick id="iso" value="" disabled className="w-[91px]" tone="bg-[#ccc] border-[#c4c4c4]" />
              </div>
            </Group>
            <Group title="图案填充原点" className="mt-[3px] pl-[7px] pt-[5px]">
              <Radio label="使用当前原点(T)" value="current" origin={origin} setOrigin={setOrigin} />
              <Radio label="指定的原点" value="custom" origin={origin} setOrigin={setOrigin} />
              <div className="flex items-center justify-between pl-[19px] pr-[27px]">
                <div>
                  <button type="button" disabled className={`flex h-[22px] items-center gap-[4px] ${dim}`}>
                    <span className="flex size-[20px] items-center justify-center bg-[#ccc]"><Icon name="clickOrigin" /></span>
                    单击以设置新原点
                  </button>
                  <Check label="默认为边界范围(X)" disabled />
                  <div className="pb-px pl-[24px] pt-px text-[#777]">
                    <Pick id="corner" label="默认为边界范围" value="左下" disabled className="w-[101px]" tone="bg-[#ccc] border-[#c4c4c4]" />
                  </div>
                  <Check label="存储为默认原点(F)" disabled />
                </div>
                <Brick />
              </div>
            </Group>
          </div>
        </div>
        <div className="ml-[10px] min-w-0 flex-1 pt-[2px]">
          <Group title="边界" className="pb-[4px] pl-[7px] pt-px">
            <div className="flex h-[143px] flex-col">
              <IconRow icon="pick" label="添加:拾取点" />
              <IconRow icon="selObj" label="添加:选择对象" />
              <IconRow icon="delB" label="删除边界(D)" disabled />
              <IconRow icon="recB" label="重新创建边界(B)" disabled />
              <IconRow icon="viewSel" label="查看选择集(V)" disabled />
            </div>
          </Group>
          <Group title="选项" className="mt-[9px] pb-[9px] pl-[8px] pt-[4px]">
            <div className="flex items-center gap-[5px]">
              <Check label="注释性(N)" />
              <button type="button" aria-label="info" className="flex size-[12px] items-center justify-center rounded-[3px] border border-[#7aa7cf] bg-[#eef6fd] font-['Liberation_Serif',serif] text-[10px] font-bold leading-[10px] text-[#2f6fae]">i</button>
            </div>
            <Check label="关联(A)" on />
            <Check label="创建独立的图案填充(H)" />
            <label htmlFor="order" className="flex h-[21px] items-center"><span><Key text="绘图次序(W):" /></span></label>
            <Pick id="order" value="置于边界之后" className="w-[124px]" />
          </Group>
          <div className="mt-[17px] flex pl-[8px]">
            <IconRow icon="inherit" label="继承特性" />
          </div>
        </div>
      </div>
      <div className="flex items-center px-[9px] pb-[9px] pt-[10px]">
        <button type="button" disabled className={`${dlgBtn} border-[#c4c4c4] bg-[#ccc] text-[#999]`}>预览</button>
        <div className="ml-auto flex items-center gap-[10px]">
          <button type="button" disabled className={`${dlgBtn} border-[#c4c4c4] bg-[#ccc] text-[#888]`}>确定</button>
          <button type="button" className={`${dlgBtn} border-[#adadad] bg-[#e6e6e6]`}>取消</button>
          <button type="button" className={`${dlgBtn} border-[#adadad] bg-[#e6e6e6]`}>帮助</button>
          <button type="button" aria-label="more options" className="flex size-[17px] items-center justify-center rounded-full border-2 border-[#55789f] bg-[#e3edf7]">
            <svg viewBox="0 0 10 10" className="size-[9px]" fill="none" stroke="#111" strokeWidth="2"><path d="M3.5 1.5L7 5 3.5 8.5" /></svg>
          </button>
        </div>
      </div>
    </section>
  );
}

const toggles: [string, boolean][] = [["捕捉", false], ["栅格", false], ["正交", false], ["极轴", false], ["对象捕捉", true], ["对象追踪", true], ["DUCS", true], ["DYN", true], ["线宽", false], ["模型", true]];

function StatusBar() {
  return (
    <div className="flex h-[21px] shrink-0 items-center border-t border-[#aaa] pl-[4px] pr-[3px] text-[10px] leading-[14px] text-[#111]">
      <output className="mr-[3px] h-[15px] w-[117px] shrink-0 border border-[#c4c4c4] font-['Liberation_Mono',monospace] text-[9px] leading-[14px]">130.6, 19.7, 0.0</output>
      <div className="flex gap-[3px] pt-px">
        {toggles.map(([t, on]) => (
          <button key={t} type="button" className={`flex h-[16px] items-center whitespace-nowrap border px-px ${/^[A-Z]/.test(t) ? "font-['Liberation_Mono',monospace] text-[9px]" : "text-[10px]"} ${on ? "border-b-[#eee] border-l-[#333] border-r-[#eee] border-t-[#333]" : "border-b-transparent border-l-transparent border-r-[#aaa] border-t-transparent"}`}>
            {t}
          </button>
        ))}
      </div>
      <div className="ml-auto flex items-center">
        <span>注释比例<Code>: </Code></span>
        <button type="button" className="ml-[6px] flex items-center gap-[4px]"><Code>1:1</Code><span className="border-x-[3px] border-t-[4px] border-x-transparent border-t-black" /></button>
        <Icon name="annA" className="ml-[9px] size-[14px]" />
        <Icon name="annB" className="ml-[7px] size-[13px]" />
        <Icon name="padlock" className="ml-[6px] size-[14px]" />
        <Icon name="warn" className="ml-[3px] size-[14px]" />
        <span className="ml-[8px] mr-[8px] border-x-[3px] border-t-[4px] border-x-transparent border-t-black" />
        <Icon name="clean" className="size-[15px]" />
      </div>
    </div>
  );
}

function Taskbar() {
  const apps: [string, string][] = [
    ["win", ""],
    ["search", ""],
    ["taskview", ""],
    ["mail", ""],
    ["edge", "border-[#19a8bd]"],
    ["folder", ""],
    ["note", ""],
    ["wechat", "border-[#19a8bd]"],
    ["acad", "border-[#19a8bd] bg-[#efefee]"],
  ];
  return (
    <footer className="flex h-[24px] shrink-0 items-center bg-[linear-gradient(90deg,#d6d6d9,#e5d4d3_32%,#d9d4d5_55%,#d8d6dc_75%,#dfd8d8)] text-[10px] leading-[14px] text-[#222]">
      <div className="flex self-stretch">
        {apps.map(([n, c]) => (
          <button key={n} type="button" aria-label={n} className={`mr-px flex w-[30px] items-center justify-center border-b-2 ${c || "border-transparent"}`}>
            <Icon name={n} className="size-[15px]" />
          </button>
        ))}
      </div>
      <div className="ml-auto flex items-center pr-[20px]">
        <span>桌面</span>
        <span className="ml-[7px] self-start text-[10px] leading-[8px]">»</span>
        <Icon name="plug" className="ml-[5px] size-[17px]" />
        <span className="flex h-[18px] w-[34px] items-center justify-center border-2 border-white bg-[#1c9a4c] font-['Open_Sans',sans-serif] text-[10px] text-white outline outline-[#777]">96%</span>
        <div className="ml-[5px] flex items-center gap-[6px]">
          {["chevUp", "qq", "chat", "wechat", "batt", "vol", "wifi"].map((n) => (
            <Icon key={n} name={n} className="size-[14px]" />
          ))}
        </div>
        <span className="ml-[6px] flex h-[24px] w-[26px] items-center justify-center bg-[#e9e4e6]"><Icon name="pen" className="size-[15px]" /></span>
        <span className="ml-[4px] text-[12px]">英</span>
        <Icon name="sogou" className="ml-[11px] size-[14px]" />
        <time className="ml-[14px] font-['Open_Sans',sans-serif] text-[10px]">11:39</time>
        <Icon name="notice" className="ml-[16px] size-[14px]" />
      </div>
    </footer>
  );
}

export default function App() {
  return (
    <div className="relative flex h-screen flex-col overflow-hidden bg-[#f0f0f0] font-['Noto_Sans_CJK_SC',sans-serif]">
      <Header />
      <main className="flex min-h-0 flex-1">
        <div className="flex min-w-0 flex-1 flex-col">
          <div className="flex min-h-0 flex-1">
            <div className="flex w-[21px] shrink-0 flex-col border-r border-[#bbb] bg-[#f6f6f6]">
              <VGrip />
              {drawTools.map((n) => (
                <VTool key={n} name={n} />
              ))}
              <span className="mt-[5px] flex flex-col border-t border-[#bbb]"><VGrip /></span>
              {extraTools.map((n) => (
                <VTool key={n} name={n} />
              ))}
            </div>
            <div className="ml-[2px] flex min-w-0 flex-1 flex-col border-l border-t border-[#555] pb-[3px]">
              <Drawing />
              <LayoutTabs />
            </div>
            <div className="mr-[4px] w-[19px] shrink-0 border-l border-[#bbb]">
              <div className="flex h-[310px] flex-col border-b border-r border-[#bbb] bg-[#f6f6f6]">
                <VGrip />
                {modifyTools.map((n, i) => (
                  <VTool key={i} name={n} />
                ))}
              </div>
            </div>
          </div>
          <CommandWindow />
        </div>
        <SidePanel />
      </main>
      <StatusBar />
      <Taskbar />
      <HatchDialog />
    </div>
  );
}
